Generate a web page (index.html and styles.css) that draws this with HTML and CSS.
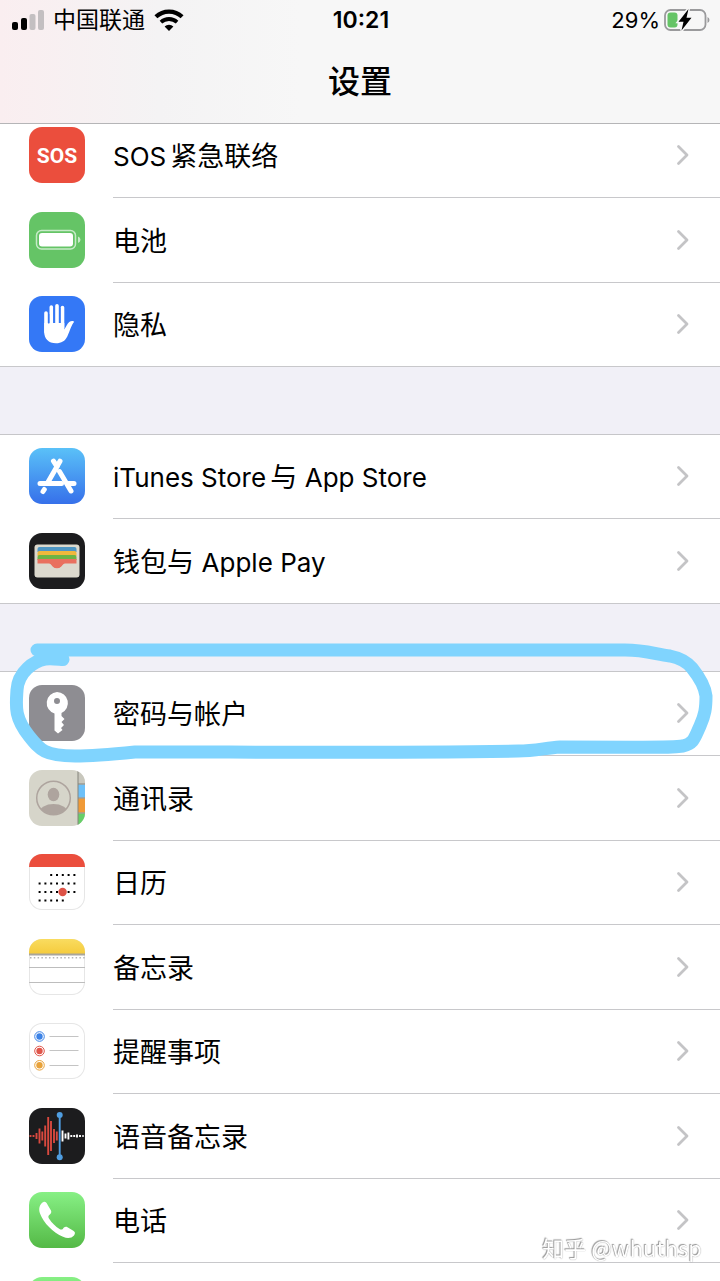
FILE: index.html
```html
<!DOCTYPE html>
<html lang="zh-CN">

<head>
    <meta charset="UTF-8">
    <meta name="viewport" content="width=device-width, initial-scale=1.0">
    <title>设置</title>
    <link rel="stylesheet" href="styles.css">
</head>

<body>

    <!-- arrow shared by all rows -->
    <svg class="defs" width="0" height="0">
        <symbol id="arrow" viewBox="0 0 14 22">
            <path d="M2.5 2.5 L11 11 L2.5 19.5" fill="none" stroke="#c4c4c6" stroke-width="2.8" stroke-linecap="round" stroke-linejoin="round"/>
        </symbol>
    </svg>

    <header class="header">
        <div class="status">
            <div class="status_left">
                <svg class="signal" viewBox="0 0 32 20">
                    <rect x="0" y="12" width="6" height="8" rx="2"/>
                    <rect x="9" y="8" width="6" height="12" rx="2"/>
                    <rect x="17.500" y="4" width="6" height="16" rx="2" fill="#c3bfc1"/>
                    <rect x="26" y="0" width="6" height="20" rx="2" fill="#c3bfc1"/>
                </svg>
                <span class="carrier">中国联通</span>
                <svg class="wifi" viewBox="0 0 28 21">
                    <path d="M1.500 7.500 A18 18 0 0 1 26.500 7.500" fill="none" stroke="#000" stroke-width="4"/>
                    <path d="M6.300 12.500 A11.500 11.500 0 0 1 21.700 12.500" fill="none" stroke="#000" stroke-width="3.600"/>
                    <path d="M14 21 L9.800 16.800 A6 6 0 0 1 18.200 16.800 Z"/>
                </svg>
            </div>
            <span class="time">10:21</span>
            <div class="status_right">
                <span>29%</span>
                <svg class="power" viewBox="0 0 46 24">
                    <rect x="1" y="2" width="40.500" height="20" rx="5.500" fill="none" stroke="#9a9a9c" stroke-width="1.800"/>
                    <path d="M43.500 9 Q45.500 10 45.500 12 T43.500 15 Z" fill="#9a9a9c"/>
                    <rect x="3.500" y="4.500" width="10" height="15" rx="3" fill="#65c466"/>
                    <path d="M24.500 1 L14.500 13.800 H19.500 L17.500 22.500 L27.500 9.700 H22.500 Z" stroke="#f7f7f7" stroke-width="3" paint-order="stroke"/>
                </svg>
            </div>
        </div>
        <h1>设置</h1>
    </header>

    <main class="list">
        <ul class="group first">
            <li><a class="row" href="#sos">
                <span class="icon red">SOS</span>
                <span class="label"><span class="latin">SOS</span>紧急联络</span>
                <svg class="arrow"><use href="#arrow"/></svg>
            </a></li>
            <li><a class="row" href="#battery">
                <svg class="icon green" viewBox="0 0 56 56">
                    <rect x="7.500" y="18.500" width="39" height="18.500" rx="5" fill="none" stroke="#c6eac7" stroke-width="1.500"/>
                    <rect x="10" y="21" width="34" height="13.500" rx="3" fill="#fff"/>
                    <path d="M49 24.500 Q51.500 25.500 51.500 27.700 T49 31 Z" fill="#c6eac7"/>
                </svg>
                <span class="label">电池</span>
                <svg class="arrow"><use href="#arrow"/></svg>
            </a></li>
            <li><a class="row" href="#privacy">
                <svg class="icon blue" viewBox="0 0 56 56">
                    <g stroke="#fff" stroke-width="3.600" stroke-linecap="round">
                        <path d="M17 17 V36 M22.300 11 V32 M28 9.700 V32 M33.500 11.500 V32"/>
                    </g>
                    <path d="M15.200 27 H35.300 V33.500 C37 31 38.200 27.800 40.200 26 C42 24.500 44.500 24.700 45.200 25.800 C42.500 28.500 41 35 38.300 40.500 C36 45 32.500 47.300 27 47.300 C19.500 47.300 15.200 42.500 15.200 36 Z" fill="#fff"/>
                    <path d="M19.700 18 V27.500 M25.200 12 V27 M30.800 12 V27" stroke="#3478f6" stroke-width="1.300"/>
                </svg>
                <span class="label">隐私</span>
                <svg class="arrow"><use href="#arrow"/></svg>
            </a></li>
        </ul>

        <ul class="group">
            <li><a class="row" href="#store">
                <svg class="icon store" viewBox="0 0 56 56">
                    <g stroke="#fff" stroke-width="5" stroke-linecap="round" fill="none">
                        <path d="M31 13.200 L18.500 35"/>
                        <path d="M24.500 13.200 L28 18.500 M30.500 23.500 L42 43"/>
                        <path d="M11 35.500 H32.500 M39.500 35.500 H45"/>
                        <path d="M15.300 41.500 L14 43.500"/>
                    </g>
                </svg>
                <span class="label"><span class="latin">iTunes Store</span>与 <span class="latin">App Store</span></span>
                <svg class="arrow"><use href="#arrow"/></svg>
            </a></li>
            <li><a class="row" href="#wallet">
                <svg class="icon dark" viewBox="0 0 56 56">
                    <rect x="5.500" y="11.500" width="45" height="33" rx="3" fill="#dcd9ce"/>
                    <path d="M8.500 19 V16 Q8.500 14 10.500 14 H45.500 Q47.500 14 47.500 16 V19 Z" fill="#4f96c4"/>
                    <path d="M8.500 23 V20 Q8.500 18 10.500 18 H45.500 Q47.500 18 47.500 20 V23 Z" fill="#efb83c"/>
                    <path d="M8.500 27 V24 Q8.500 22 10.500 22 H45.500 Q47.500 22 47.500 24 V27 Z" fill="#6cb445"/>
                    <path d="M8.500 31 V26 H47.500 V31 H36 C33.500 31 33 35.500 28 35.500 C23 35.500 22.500 31 20 31 Z" fill="#e9705f"/>
                    <path d="M6 30.500 H20 C22.500 30.500 23 35.500 28 35.500 C33 35.500 33.500 30.500 36 30.500 H50 V42 Q50 44 48 44 H8 Q6 44 6 42 Z" fill="#dcd9ce"/>
                </svg>
                <span class="label">钱包与 <span class="latin">Apple Pay</span></span>
                <svg class="arrow"><use href="#arrow"/></svg>
            </a></li>
        </ul>

        <ul class="group">
            <li class="marked"><a class="row" href="#passwords">
                <svg class="icon gray" viewBox="0 0 56 56">
                    <path fill="#fff" fill-rule="evenodd" d="M28 7 A11 11 0 0 1 32.500 28 V31 L35.500 34 L32.500 37 L35 40 L32 43 L33.500 45 L29 48.500 L25.500 45.500 V28.500 A11 11 0 0 1 28 7 Z M28 13 A3 3 0 1 0 28 19 A3 3 0 1 0 28 13 Z"/>
                </svg>
                <span class="label">密码与帐户</span>
                <svg class="arrow"><use href="#arrow"/></svg>
            </a>
                <!-- hand drawn loop -->
                <svg class="loop" viewBox="0 640 720 130">
                    <path d="M37 650 H625 C645 650 655 654 670 656 C680 658 687 662 692 668 C700 678 705 687 706 696 C706 708 705 715 700 726 C694 739 694 743 683 746 C670 748 664 747 560 747 C545 748 535 751 518 751 C400 753 260 752 135 752 C115 754 95 756 75 756 C45 756 40 750 29 736 C14 717 16 706 17 690 C18 672 34 661 45 659 C50 658 57 659 63 659.500"/>
                </svg>
            </li>
            <li><a class="row" href="#contacts">
                <svg class="icon contacts" viewBox="0 0 56 56">
                    <rect x="49" width="7" height="14" fill="#c8c7bd"/>
                    <rect x="49" y="14.500" width="7" height="13" fill="#6dc0f8"/>
                    <rect x="49" y="28.500" width="7" height="14" fill="#f09a37"/>
                    <rect x="49" y="43.500" width="7" height="13" fill="#66cf68"/>
                    <path d="M49 0 V56 M49 14 H56 M49 28 H56 M49 43 H56" stroke="#85847c" stroke-width="1"/>
                    <clipPath id="face"><circle cx="24.500" cy="28" r="16.500"/></clipPath>
                    <g clip-path="url(#face)" fill="#aea49e">
                        <ellipse cx="24.500" cy="24.500" rx="5.800" ry="6.800"/>
                        <ellipse cx="24.500" cy="42.500" rx="14" ry="8.500"/>
                    </g>
                    <circle cx="24.500" cy="28" r="16.800" fill="none" stroke="#aea49e" stroke-width="1.500"/>
                </svg>
                <span class="label">通讯录</span>
                <svg class="arrow"><use href="#arrow"/></svg>
            </a></li>
            <li><a class="row" href="#calendar">
                <svg class="icon white" viewBox="0 0 56 56">
                    <rect width="56" height="13" fill="#eb4e3d"/>
                    <g stroke="#000" stroke-width="2" stroke-dasharray="2 3.800">
                        <path d="M21.200 21 H47"/>
                        <path d="M9.600 29.500 H47"/>
                        <path d="M9.600 38 H47"/>
                        <path d="M9.600 46.500 H36"/>
                    </g>
                    <circle cx="33.600" cy="38" r="4.200" fill="#dd5246"/>
                </svg>
                <span class="label">日历</span>
                <svg class="arrow"><use href="#arrow"/></svg>
            </a></li>
            <li><a class="row" href="#notes">
                <svg class="icon white" viewBox="0 0 56 56">
                    <linearGradient id="pad" x2="0" y2="1">
                        <stop offset="0" stop-color="#f9dc60"/>
                        <stop offset="1" stop-color="#f5cb3c"/>
                    </linearGradient>
                    <rect width="56" height="15" fill="url(#pad)"/>
                    <path d="M0 15.500 H56" stroke="#a9a69c" stroke-width="1.800"/>
                    <path d="M1 18.800 H56" stroke="#b5b5b5" stroke-width="1.600" stroke-dasharray="1.500 2.300"/>
                    <path d="M0 28.500 H56 M0 43.500 H56" stroke="#bdbdbd" stroke-width="1"/>
                </svg>
                <span class="label">备忘录</span>
                <svg class="arrow"><use href="#arrow"/></svg>
            </a></li>
            <li><a class="row" href="#reminders">
                <svg class="icon white" viewBox="0 0 56 56">
                    <g fill="#fff" stroke-width="1">
                        <circle cx="10.500" cy="13.500" r="4.800" stroke="#3b82e6"/>
                        <circle cx="10.500" cy="28" r="4.800" stroke="#e0564b"/>
                        <circle cx="10.500" cy="42.300" r="4.800" stroke="#e8a23a"/>
                    </g>
                    <circle cx="10.500" cy="13.500" r="3.200" fill="#3b82e6"/>
                    <circle cx="10.500" cy="28" r="3.200" fill="#e0564b"/>
                    <circle cx="10.500" cy="42.300" r="3.200" fill="#e8a23a"/>
                    <path d="M20.500 13.500 H49.500 M20.500 27.500 H49.500 M20.500 42.500 H49.500" stroke="#c4c4c4" stroke-width="1"/>
                </svg>
                <span class="label">提醒事项</span>
                <svg class="arrow"><use href="#arrow"/></svg>
            </a></li>
            <li><a class="row" href="#memos">
                <svg class="icon dark" viewBox="0 0 56 56">
                    <path d="M1.500 27 V29 M4.500 27 V29 M7.500 25 V31 M10.500 20.500 V35.500 M13.300 23.500 V32.500 M16.200 17.500 V38.500 M19.200 9 V47 M22 13 V43 M25 21 V35 M27.800 23.500 V32.500" stroke="#d9493f" stroke-width="1.900"/>
                    <path d="M33.500 22.500 V33.500 M36.500 25.500 V30.500 M39.400 24.500 V31.500 M42.300 27 V29 M45.200 27 V29 M48 26.500 V29.500 M51 27 V29 M54 27.300 V28.700" stroke="#fff" stroke-width="1.900"/>
                    <path d="M30.700 7 V49" stroke="#4f9de0" stroke-width="1.900"/>
                    <circle cx="30.700" cy="7" r="3" fill="#4f9de0"/>
                    <circle cx="30.700" cy="49.300" r="3" fill="#4f9de0"/>
                </svg>
                <span class="label">语音备忘录</span>
                <svg class="arrow"><use href="#arrow"/></svg>
            </a></li>
            <li><a class="row" href="#phone">
                <svg class="icon phone" viewBox="0 0 56 56">
                    <path d="M14.500 10 C16.500 9.300 17.800 11 19 13.500 L22 18.500 C23 20.500 21.500 22 20 23.300 C19 24.300 19.300 25.500 20.300 27 C23 31 26.500 34.500 30.500 37 C32 38 33 37.700 34 36.700 C35.200 35 36.500 34.300 38.500 35.300 L44.300 38.800 C46.300 40 46.500 41.500 45 43.500 C42.500 46.300 38.500 46.800 34 44.800 C24 40.500 14.500 31 11 21.500 C9.300 16.500 10.500 12 14.500 10 Z" fill="#fff"/>
                </svg>
                <span class="label">电话</span>
                <svg class="arrow"><use href="#arrow"/></svg>
            </a></li>
            <li><a class="row" href="#messages" aria-label="信息">
                <svg class="icon phone" viewBox="0 0 56 56">
                    <ellipse cx="28" cy="27" rx="19" ry="16" fill="#fff"/>
                </svg>
            </a></li>
        </ul>
    </main>

    <div class="watermark">知乎 @whuthsp</div>

</body>

</html>
```

FILE: styles.css
```css
* {
    box-sizing: border-box;
}

body {
    display: flex;
    flex-direction: column;
    height: 100vh;
    margin: 0;
    overflow: hidden;
    background-color: #f1f0f7;
    color: #000;
    font-family: Inter, "Noto Sans CJK SC", sans-serif;
}

.defs {
    position: absolute;
}

/* top bar */
.header {
    flex: none;
    height: 124px;
    border-bottom: 1px solid #b5b5b7;
    background: linear-gradient(to right, #faeef0 0, #f4f3f4 160px, #f7f7f7 300px);
}

.status {
    display: grid;
    grid-template-columns: 1fr auto 1fr;
    align-items: center;
    height: 40px;
    padding: 0 10px 0 12px;
    font-size: 22px;
}

.status_left,
.status_right {
    display: flex;
    align-items: center;
}

.status_left {
    gap: 9px;
}

.status_right {
    justify-content: flex-end;
    gap: 4px;
}

.signal {
    width: 32px;
    height: 20px;
}

.carrier {
    padding-bottom: 4px;
    font-size: 23px;
}

.wifi {
    width: 30px;
    height: 22px;
}

.time {
    font-size: 23px;
    font-weight: 600;
}

.power {
    width: 46px;
    height: 24px;
}

h1 {
    margin: 0;
    font-size: 32px;
    font-weight: 500;
    line-height: 84px;
    text-align: center;
}

/* rows */
.list {
    flex: 1;
    overflow: hidden;
}

.group {
    display: grid;
    grid-auto-rows: 84px 85px;
    margin: 0 0 67px;
    padding: 0;
    border-top: 1px solid #c6c6c9;
    background-color: #fff;
    list-style: none;
}

/* scrolled a little under the header */
.first {
    margin-top: -11px;
}

.row {
    display: flex;
    align-items: center;
    gap: 28px;
    height: 100%;
    padding: 0 30px 2px 29px;
    background: linear-gradient(#c8c8cb, #c8c8cb) 113px 100% / 100% 1px no-repeat;
    color: inherit;
    text-decoration: none;
}

li:last-child .row {
    background-position: 0 100%;
}

.label {
    flex: 1;
    padding-top: 4px;
    font-size: 27px;
    line-height: 40px;
    white-space: nowrap;
}

.latin {
    margin-right: 4px;
    font-size: 26px;
}

.arrow {
    flex: none;
    width: 14px;
    height: 22px;
}

/* icons */
.icon {
    flex: none;
    width: 56px;
    height: 56px;
    border-radius: 13px;
    overflow: hidden;
}

.red {
    background-color: #eb4e3d;
    color: #fff;
    font: bold 21px/58px Roboto, sans-serif;
    text-align: center;
}

.green {
    background-color: #65c466;
}

.blue {
    background-color: #3478f6;
}

.store {
    background: linear-gradient(#5ac1f8, #3670ea);
}

.dark {
    background-color: #1c1c1e;
}

.gray {
    background-color: #8e8d92;
}

.contacts {
    background-color: #d6d5ca;
}

.white {
    background-color: #fff;
    box-shadow: inset 0 0 0 1px #e6e6e6;
}

.phone {
    background: linear-gradient(#87f085, #54b946);
}

.marked {
    position: relative;
}

.loop {
    position: absolute;
    top: -32px;
    left: 0;
    width: 100%;
    pointer-events: none;
}

.loop path {
    fill: none;
    stroke: #80d4fe;
    stroke-width: 13;
    stroke-linecap: round;
    stroke-linejoin: round;
}

.watermark {
    position: fixed;
    right: 18px;
    bottom: 19px;
    color: #fff;
    font-family: "Noto Sans CJK SC", sans-serif;
    font-size: 22px;
    line-height: 30px;
    text-shadow: 0 0 1px #888, -1px -1px 1px #999;
}
```
